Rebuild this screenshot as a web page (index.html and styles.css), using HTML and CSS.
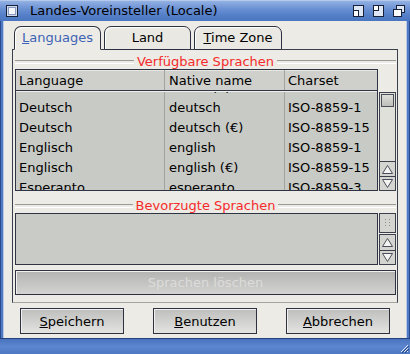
FILE: index.html
```html
<!DOCTYPE html>
<html>
<head>
<meta charset="utf-8">
<title>Locale</title>
<link rel="stylesheet" href="styles.css">
</head>
<body>
<div class="window">
  <div class="titlebar">
    <span class="gadget close">
      <svg width="12" height="12" viewBox="0 0 12 12"><rect x="0.5" y="0.5" width="11" height="11" fill="#cfdaee" stroke="#17213a"/><rect x="2.5" y="2.5" width="7" height="7" fill="#f4f7fc" stroke="#8a9cc0"/></svg>
    </span>
    <span class="title">Landes-Voreinsteller (Locale)</span>
    <span class="gadgets-right">
      <svg width="11" height="12" viewBox="0 0 11 12"><rect x="0.5" y="0.5" width="10" height="11" fill="#dfe7f5" stroke="#17213a"/><rect x="0.5" y="5.5" width="5" height="6" fill="#ffffff" stroke="#17213a"/></svg>
      <svg width="11" height="12" viewBox="0 0 11 12"><rect x="0.5" y="0.5" width="10" height="11" fill="#dfe7f5" stroke="#17213a"/><rect x="0.5" y="0.5" width="5" height="5" fill="#ffffff" stroke="#17213a"/></svg>
      <svg width="12" height="12" viewBox="0 0 12 12"><rect x="3.5" y="0.5" width="8" height="7" fill="#dfe7f5" stroke="#17213a"/><rect x="0.5" y="4.5" width="8" height="7" fill="#ffffff" stroke="#17213a"/></svg>
    </span>
  </div>
  <div class="middle">
    <div class="side side-left"></div>
    <div class="content">
      <div class="tabs">
        <div class="tab active"><u>L</u>anguages</div>
        <div class="tab">Land</div>
        <div class="tab wide"><u>T</u>ime Zone</div>
      </div>
      <div class="panel">
        <div class="group-title"><span>Verfügbare Sprachen</span></div>
        <div class="list-row">
          <div class="listview">
            <div class="lv-header">
              <div class="cell c1">Language</div>
              <div class="cell c2">Native name</div>
              <div class="cell c3">Charset</div>
            </div>
            <div class="lv-body">
              <div class="lv-rows">
                <div class="lv-row"><div class="cell c1">Dänisch</div><div class="cell c2">dansk (€)</div><div class="cell c3">ISO-8859-15</div></div>
                <div class="lv-row"><div class="cell c1">Deutsch</div><div class="cell c2">deutsch</div><div class="cell c3">ISO-8859-1</div></div>
                <div class="lv-row"><div class="cell c1">Deutsch</div><div class="cell c2">deutsch (€)</div><div class="cell c3">ISO-8859-15</div></div>
                <div class="lv-row"><div class="cell c1">Englisch</div><div class="cell c2">english</div><div class="cell c3">ISO-8859-1</div></div>
                <div class="lv-row"><div class="cell c1">Englisch</div><div class="cell c2">english (€)</div><div class="cell c3">ISO-8859-15</div></div>
                <div class="lv-row"><div class="cell c1">Esperanto</div><div class="cell c2">esperanto</div><div class="cell c3">ISO-8859-3</div></div>
              </div>
            </div>
          </div>
          <div class="scrollbar">
            <div class="knob"></div>
            <div class="track"></div>
            <div class="arrow up">
              <svg width="13" height="11" viewBox="0 0 13 11"><path d="M6.5 1.5 L11.5 9.5 L1.5 9.5 Z" fill="#f4f4f2" stroke="#4a4e58"/></svg>
            </div>
            <div class="arrow down">
              <svg width="13" height="11" viewBox="0 0 13 11"><path d="M1.5 1.5 L11.5 1.5 L6.5 9.5 Z" fill="#f4f4f2" stroke="#4a4e58"/></svg>
            </div>
          </div>
        </div>
        <div class="group-title second"><span>Bevorzugte Sprachen</span></div>
        <div class="list-row">
          <div class="prefbox"></div>
          <div class="gadget-col">
            <div class="drag">
              <svg width="7" height="10" viewBox="0 0 7 10"><g fill="#8c8e94"><rect x="1" y="1" width="1" height="1"/><rect x="5" y="1" width="1" height="1"/><rect x="1" y="4" width="1" height="1"/><rect x="5" y="4" width="1" height="1"/><rect x="1" y="7" width="1" height="1"/><rect x="5" y="7" width="1" height="1"/></g></svg>
            </div>
            <div class="arrow up tall">
              <svg width="13" height="11" viewBox="0 0 13 11"><path d="M6.5 1.5 L11.5 9.5 L1.5 9.5 Z" fill="#f4f4f2" stroke="#4a4e58"/></svg>
            </div>
            <div class="arrow down">
              <svg width="13" height="11" viewBox="0 0 13 11"><path d="M1.5 1.5 L11.5 1.5 L6.5 9.5 Z" fill="#f4f4f2" stroke="#4a4e58"/></svg>
            </div>
          </div>
        </div>
        <div class="btn disabled">Sprachen löschen</div>
      </div>
      <div class="buttons">
        <div class="btn main"><u>S</u>peichern</div>
        <div class="btn main"><u>B</u>enutzen</div>
        <div class="btn main"><u>A</u>bbrechen</div>
      </div>
    </div>
    <div class="side side-right"></div>
  </div>
  <div class="bottombar">
    <svg class="grip" width="9" height="9" viewBox="0 0 9 9"><path d="M8 1 L1 8 M8 4 L4 8 M8 7 L7 8" stroke="#dfe8f8" stroke-width="1"/><path d="M9 2 L2 9 M9 5 L5 9" stroke="#2a447c" stroke-width="1"/></svg>
  </div>
</div>
</body>
</html>
```

FILE: styles.css
```css
* { box-sizing: border-box; }
html, body { margin: 0; padding: 0; }
body {
  width: 410px;
  height: 354px;
  overflow: hidden;
  font-family: "DejaVu Sans", "Liberation Sans", sans-serif;
  font-size: 13px;
  color: #000;
}
.window {
  width: 410px;
  height: 354px;
  display: flex;
  flex-direction: column;
  background: #ecebe5;
}
.titlebar {
  height: 21px;
  flex: none;
  display: flex;
  align-items: center;
  padding-left: 6px;
  padding-right: 5px;
  background: linear-gradient(#93b1e3, #6a90d3 40%, #5580c9 70%, #4a75c0);
  border-top: 1px solid #b5c9ec;
}
.gadget { display: flex; }
.title {
  margin-left: 12px;
  line-height: 20px;
  white-space: nowrap;
}
.gadgets-right {
  margin-left: auto;
  display: flex;
  gap: 9px;
  align-items: center;
}
.middle {
  flex: 1;
  display: flex;
}
.side {
  width: 4px;
  flex: none;
  background: #4f79c4;
}
.side-left { border-left: 1px solid #2a4a8c; border-right: 1px solid #b8c9e6; }
.side-right { border-left: 1px solid #b8c9e6; border-right: 1px solid #2a4a8c; }
.content {
  flex: 1;
  display: flex;
  flex-direction: column;
  padding-top: 5px;
  min-width: 0;
}
.tabs {
  display: flex;
  gap: 3px;
  padding-left: 10px;
  height: 24px;
  margin-bottom: -1px;
  position: relative;
  z-index: 1;
}
.tab {
  width: 87px;
  height: 24px;
  border: 1px solid #2c3142;
  border-radius: 7px 7px 0 0;
  box-shadow: inset 1px 1px 0 #ffffff;
  background: #e9e8e2;
  text-align: center;
  line-height: 22px;
}
.tab.wide { width: 88px; }
.tab.active {
  color: #3d63b6;
  border-bottom-color: #ecebe5;
  background: #ecebe5;
}
.panel {
  margin: 0 8px;
  border: 1px solid #3a3f4e;
  border-bottom-color: #a4a49e;
  padding: 4px 1px 7px 2px;
  display: flex;
  flex-direction: column;
}
.group-title {
  height: 15px;
  display: flex;
  align-items: center;
  gap: 3px;
  color: #f52a2a;
  line-height: 15px;
}
.group-title::before,
.group-title::after {
  content: "";
  flex: 1;
  height: 2px;
  border-top: 1px solid #9a9a94;
  border-bottom: 1px solid #ffffff;
}
.group-title.second { margin-top: 7px; }
.list-row {
  display: flex;
  gap: 1px;
}
.listview {
  width: 363px;
  height: 122px;
  border: 1px solid #2f3444;
  display: flex;
  flex-direction: column;
  background: #c8cac5;
}
.lv-header {
  height: 21px;
  flex: none;
  display: flex;
  background: #cfd0cb;
  border-bottom: 1px solid #2f3444;
  box-shadow: inset 0 1px 0 #e6e6e2;
  line-height: 21px;
}
.cell {
  padding-left: 3px;
  white-space: nowrap;
  overflow: hidden;
}
.c1 { width: 149px; border-right: 1px solid #a2a39e; }
.c2 { width: 120px; border-right: 1px solid #a2a39e; padding-left: 4px; }
.c3 { flex: 1; }
.lv-body {
  flex: 1;
  overflow: hidden;
  border-top: 1px solid #eeeeea;
}
.lv-rows { margin-top: -14px; }
.lv-row {
  display: flex;
  height: 20px;
  line-height: 20px;
}
.scrollbar {
  width: 17px;
  height: 99px;
  margin-top: 23px;
  border: 1px solid #3b404c;
  background: #e0e0da;
  display: flex;
  flex-direction: column;
}
.knob {
  height: 13px;
  margin: 1px 1px 0;
  border: 1px solid #4a4e58;
  background: linear-gradient(#dedfdb, #bdbeb9);
}
.track { flex: 1; }
.arrow {
  height: 15px;
  display: flex;
  align-items: center;
  justify-content: center;
  border-top: 1px solid #3b404c;
  background: #d4d5d0;
}
.arrow.down { height: 14px; }
.prefbox {
  width: 363px;
  height: 52px;
  border: 1px solid #2f3444;
  background: #c9cbc6;
}
.gadget-col {
  width: 17px;
  height: 52px;
  display: flex;
  flex-direction: column;
}
.drag {
  height: 20px;
  border: 1px solid #3b404c;
  background: #d4d5d0;
  display: flex;
  align-items: center;
  justify-content: center;
  margin-bottom: 1px;
}
.gadget-col .arrow {
  border: 1px solid #3b404c;
}
.gadget-col .arrow.tall { height: 16px; border-bottom: none; }
.gadget-col .arrow.down { height: 15px; }
.btn {
  display: flex;
  align-items: center;
  justify-content: center;
  border: 1px solid #2e3240;
  box-shadow: inset 1px 1px 0 #f0f0ee;
  white-space: nowrap;
}
.btn.disabled {
  margin-top: 5px;
  height: 25px;
  background: linear-gradient(#b3b3b1, #d3d3d1);
  color: #dcdcda;
}
.buttons {
  margin-top: 5px;
  height: 26px;
  display: flex;
  justify-content: space-between;
  padding: 0 16px;
}
.btn.main {
  width: 104px;
  height: 26px;
  background: linear-gradient(#bebebc, #e3e3e1);
}
.bottombar {
  height: 16px;
  flex: none;
  background: linear-gradient(#4a73be, #5d86cf 50%, #4d77c2);
  border-top: 1px solid #26427c;
  display: flex;
  justify-content: flex-end;
  align-items: flex-end;
}
.grip { margin: 0 1px 1px 0; }
```
